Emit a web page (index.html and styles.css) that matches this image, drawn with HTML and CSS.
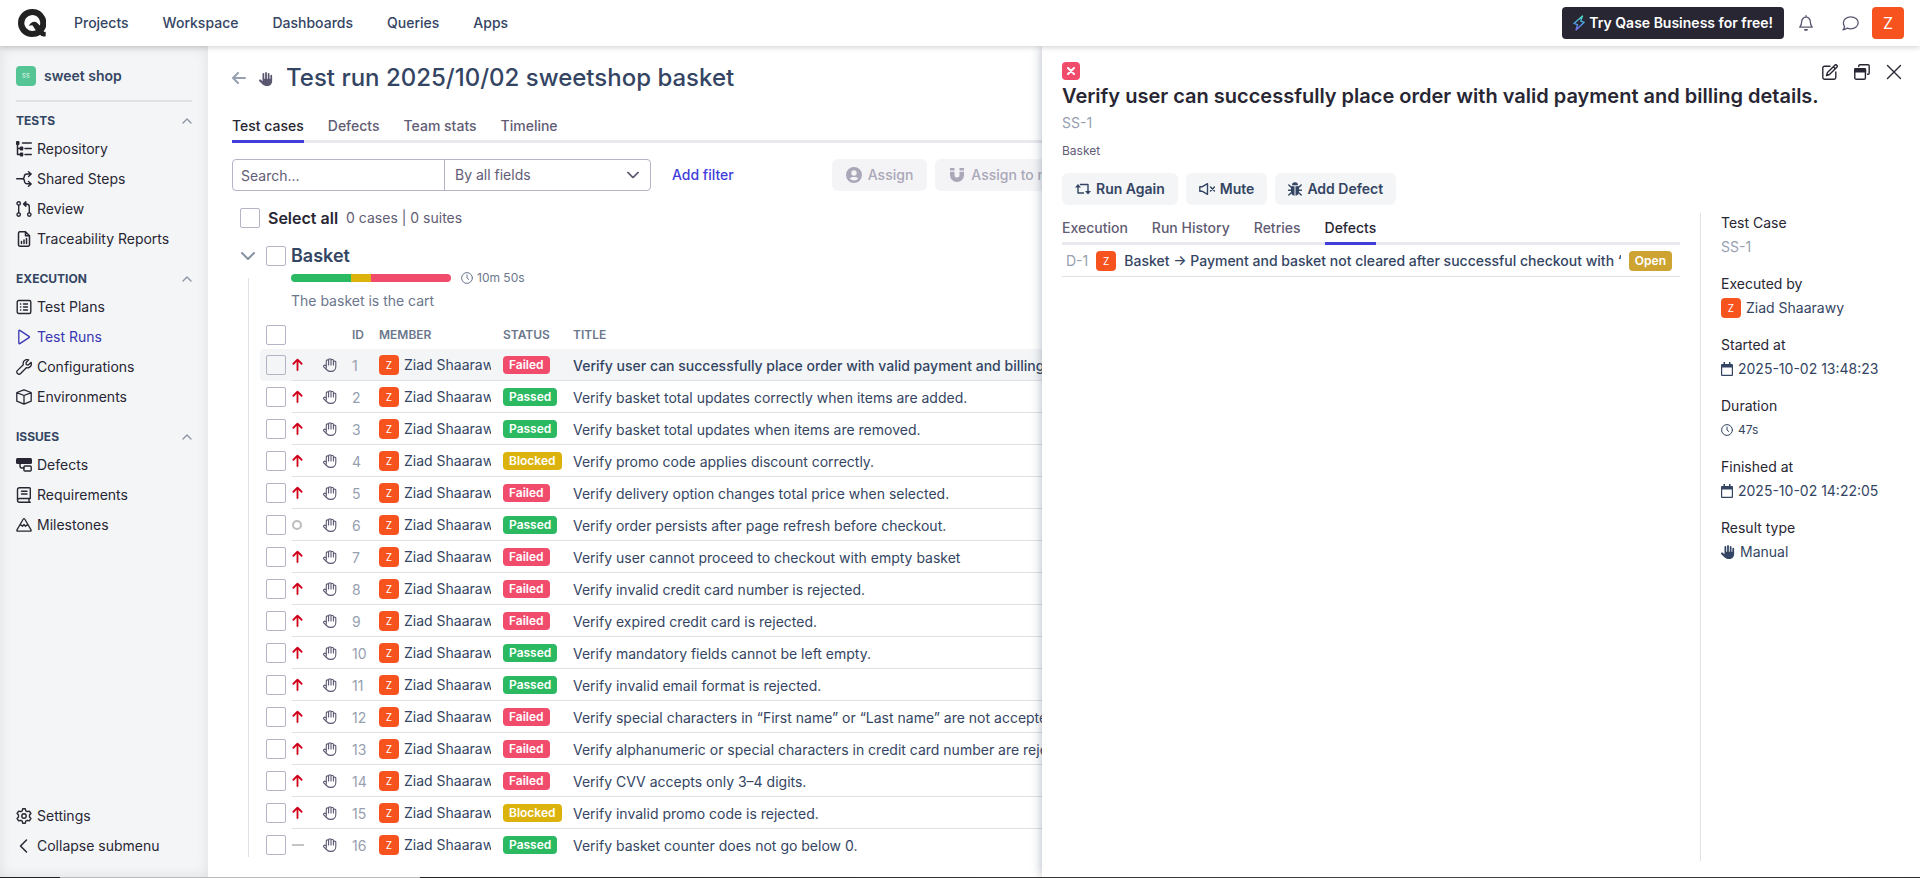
FILE: index.html
```html
<!DOCTYPE html>
<html lang="en">
<head>
<meta charset="utf-8">
<title>Test run 2025/10/02 sweetshop basket</title>
<meta name="viewport" content="width=device-width, initial-scale=1">
<link rel="stylesheet" href="styles.css">
</head>
<body>
<svg class="sprite" aria-hidden="true">
  <symbol id="hand" viewBox="0 0 512 512"><path fill="currentColor" d="M288 32c0-17.700-14.300-32-32-32s-32 14.300-32 32V240c0 8.800-7.200 16-16 16s-16-7.200-16-16V64c0-17.700-14.300-32-32-32s-32 14.300-32 32V336c0 1.500 0 3.100 .1 4.600L67.600 283c-16-15.200-41.300-14.600-56.600 1.400s-14.600 41.300 1.400 56.600L124.800 448c43.100 41.100 100.400 64 160 64H304c97.200 0 176-78.800 176-176V128c0-17.700-14.300-32-32-32s-32 14.300-32 32V240c0 8.800-7.200 16-16 16s-16-7.200-16-16V64c0-17.700-14.300-32-32-32s-32 14.300-32 32V240c0 8.800-7.200 16-16 16s-16-7.200-16-16V32z"/></symbol>
  <symbol id="hand-o" viewBox="0 0 14 14"><path class="s" stroke-width="1.100" d="M3.300 10V3a1.100 1.100 0 0 1 2.300 0v4M5.600 3V1.900a1.200 1.200 0 0 1 2.400 0V7M8 2.400a1.200 1.200 0 0 1 2.400 0V7M10.400 4.300a1.200 1.200 0 0 1 2.400 0V8.800a4.600 4.600 0 0 1-4.600 4.600h-.7a5 5 0 0 1-3.500-1.400L1 9.200a1.200 1.200 0 0 1 1.700-1.700l.6.500"/></symbol>
  <symbol id="up" viewBox="0 0 12 14"><path class="s" stroke-width="2" d="M6 13V2M1.500 6.200 6 1.700l4.500 4.500"/></symbol>
  <symbol id="chev-up" viewBox="0 0 10 6"><path class="s" stroke-width="1.300" d="M1 5 5 1l4 4"/></symbol>
  <symbol id="chev-down" viewBox="0 0 14 8"><path class="s" stroke-width="2" d="m1 1 6 6 6-6"/></symbol>
  <symbol id="clock" viewBox="0 0 12 12"><g class="s"><circle cx="6" cy="6" r="5.400"/><path d="M6 3v3l1.800 1.500"/></g></symbol>
  <symbol id="cal" viewBox="0 0 12 14"><path fill="currentColor" fill-rule="evenodd" d="M2.500 0H4v2h4V0h1.500v2H11a1 1 0 0 1 1 1v10a1 1 0 0 1-1 1H1a1 1 0 0 1-1-1V3a1 1 0 0 1 1-1h1.500zM1.200 5.500v7.300h9.600V5.500z"/></symbol>
</svg>
<div class="app">
  <header class="topbar">
    <a class="logo" href="#" aria-label="Qase"><svg width="28" height="28" viewBox="0 0 28 28"><path fill="#222" fill-rule="evenodd" d="M14 0a14 14 0 0 0 0 28c3.400 0 6-.8 8.200-2.200 1 1.300 2.500 1.900 5.500 1.400v-4.400c-1 .2-1.700 0-2.100-.5A14 14 0 0 0 14 0zm0 6a8 8 0 0 1 7.800 10.500l-2.800-2.800c-.7-.7-1.500-.9-2.500-.9-2.600.1-4.800 1.600-5.500 4l3.400-.5 3.400 4.900A8 8 0 1 1 14 6z"/></svg></a>
    <nav class="topnav" aria-label="Main">
      <a href="#">Projects</a><a href="#">Workspace</a><a href="#">Dashboards</a><a href="#">Queries</a><a href="#">Apps</a>
    </nav>
    <div class="actions">
      <button class="trial"><svg width="12" height="16" viewBox="0 0 12 16"><defs><linearGradient id="g" x1="0" y1="0" x2="0" y2="1"><stop offset="0" stop-color="#4fe0c0"/><stop offset=".5" stop-color="#4aa6e8"/><stop offset="1" stop-color="#7a6cf0"/></linearGradient></defs><path d="M9.500 1 1 8.500l3.600 1.200L3 15l8.200-7.700-3.500-1.200z" fill="none" stroke="url(#g)" stroke-width="1.300" stroke-linejoin="round"/></svg>Try Qase Business for free!</button>
      <button class="icon-btn" aria-label="Notifications"><svg width="14" height="16" viewBox="0 0 14 16"><g class="s" stroke-width="1.300"><path d="M7 .7v1.500M7 2.200a4.300 4.300 0 0 0-4.300 4.300c0 3-.7 4.200-1.900 5.700h12.400c-1.200-1.500-1.900-2.700-1.900-5.700A4.300 4.300 0 0 0 7 2.200z"/></g><path fill="currentColor" d="M5 14h4a2 2 0 0 1-4 0z"/></svg></button>
      <button class="icon-btn" aria-label="Messages"><svg width="17" height="15" viewBox="0 0 17 15"><path class="s" stroke-width="1.300" d="M8.800.8c4.100 0 7.400 2.700 7.400 6s-3.300 6-7.400 6c-1.200 0-2.400-.2-3.400-.7-1 .9-2.600 1.600-4.400 1.700.8-.9 1.500-2 1.600-3.200A5.500 5.500 0 0 1 1.400 6.800c0-3.300 3.300-6 7.400-6z"/></svg></button>
      <button class="avatar avatar-lg" aria-label="Account">Z</button>
    </div>
  </header>
  <div class="body">
    <aside class="sidebar">
      <a class="project" href="#"><span class="project-icon">SS</span>sweet shop</a>
      <section class="group">
        <button class="group-head">TESTS<svg width="10" height="6"><use href="#chev-up"/></svg></button>
        <a class="item" href="#"><svg width="16" height="16" viewBox="0 0 16 16"><g class="s" stroke-width="1.500"><path d="M1.500 2v11.500H5M1.500 7.500H5M6.500 2H15.300M9 7.500h6.300M9 13.500h6.300"/></g><g fill="currentColor"><rect width="3.500" height="4" rx="1"/><rect x="3.800" y="5.500" width="3.500" height="4" rx="1"/><rect x="3.800" y="11.500" width="3.500" height="4" rx="1"/></g></svg>Repository</a>
        <a class="item" href="#"><svg width="16" height="16" viewBox="0 0 16 16"><path class="s" stroke-width="1.400" d="M.7 7.800h5.500M6.200 7.800a2 2 0 0 0 2-2 3 3 0 0 1 3-2.800h4M6.200 7.800a2.500 2.500 0 0 1 2.300 2.500 2.500 2.500 0 0 0 2.500 2.500h4M12.500.8 15.200 3l-2.700 2.400M12.500 10.500l2.700 2.400-2.700 2.300"/></svg>Shared Steps</a>
        <a class="item" href="#"><svg width="16" height="16" viewBox="0 0 16 16"><g class="s" stroke-width="1.400"><circle cx="2.700" cy="2.400" r="1.700"/><circle cx="2.700" cy="13.600" r="1.700"/><circle cx="13.300" cy="13.600" r="1.700"/><path d="M2.700 4.200v7.600M13.300 11.800V6a3 3 0 0 0-3-3H8M9.800.8 7.500 3l2.300 2.200z"/></g></svg>Review</a>
        <a class="item" href="#"><svg width="16" height="16" viewBox="0 0 16 16"><path class="s" stroke-width="1.500" d="M3.500.8h6l4 4v9a1.400 1.400 0 0 1-1.400 1.400H3.900a1.400 1.400 0 0 1-1.400-1.400V2.200A1.400 1.400 0 0 1 3.900.8M9.500.8v4h4M5.500 10.500v2M8 9v3.500M10.500 7.500v5"/></svg>Traceability Reports</a>
      </section>
      <section class="group">
        <button class="group-head">EXECUTION<svg width="10" height="6"><use href="#chev-up"/></svg></button>
        <a class="item" href="#"><svg width="16" height="16" viewBox="0 0 16 16"><g class="s" stroke-width="1.400"><rect x="1.200" y="1.500" width="13.600" height="13" rx="1.500"/><path d="M4.500 5h.3M7.500 5h4M4.500 8h.3M7.500 8h4M4.500 11h.3M7.500 11h4"/></g></svg>Test Plans</a>
        <a class="item current" href="#" aria-current="page"><svg width="16" height="16" viewBox="0 0 16 16"><path class="s" stroke-width="1.300" d="M2.800 2v12c0 .7.500.9 1 .6l9.200-6c.5-.3.500-.9 0-1.200l-9.200-6c-.5-.3-1-.1-1 .6z"/></svg>Test Runs</a>
        <a class="item" href="#"><svg width="16" height="16" viewBox="0 0 16 16"><path class="s" stroke-width="1.300" d="M12.700.9a4 4 0 0 0-5.400 4.800L1.300 11.600a1.900 1.900 0 0 0 0 2.700l.4.400a1.900 1.900 0 0 0 2.700 0l5.900-6a4 4 0 0 0 4.800-5.400L12.300 6l-2-.3-.3-2z"/></svg>Configurations</a>
        <a class="item" href="#"><svg width="16" height="16" viewBox="0 0 16 16"><path class="s" stroke-width="1.300" d="M8 .8 15.200 3.500v8.700L8 15.200.8 12.200V3.500zM.8 3.700 8 6.500l7.200-2.800M8 6.500v8.700"/></svg>Environments</a>
      </section>
      <section class="group">
        <button class="group-head">ISSUES<svg width="10" height="6"><use href="#chev-up"/></svg></button>
        <a class="item" href="#"><svg width="16" height="16" viewBox="0 0 16 16"><rect y="1" width="16" height="6" rx="1.500" fill="currentColor"/><g class="s" stroke-width="1.400"><path d="M4 6.500V9a2 2 0 0 0 2 2h2"/><rect x="7.900" y="9" width="7.300" height="5" rx="1"/></g></svg>Defects</a>
        <a class="item" href="#"><svg width="16" height="16" viewBox="0 0 16 16"><path class="s" stroke-width="1.400" d="M14.300 11.500V1.700a1 1 0 0 0-1-1H3.500a2 2 0 0 0-2 2v10.500a2 2 0 0 0 2 2h10.800M14.300 11.500H3.500a1.900 1.900 0 0 0-2 1.800M13 11.500v3.500M5.500 4.200h5.500M5.500 7h5.500"/></svg>Requirements</a>
        <a class="item" href="#"><svg width="16" height="16" viewBox="0 0 16 16"><path class="s" stroke-width="1.300" d="M7.300 2 1 12.900c-.4.700 0 1.300.7 1.300h12.600c.7 0 1.100-.6.7-1.300L8.700 2c-.3-.6-1.100-.6-1.400 0zM4.500 7.500l2 1.800L8 7.500l1.500 1.800 2-1.800"/></svg>Milestones</a>
      </section>
      <section class="group group-end">
        <a class="item" href="#"><svg width="16" height="16" viewBox="0 0 16 16"><g class="s" stroke-width="1.400"><circle cx="8" cy="8" r="2.200"/><path d="M6.700.8h2.600l.5 2 1.500.9 2-.6 1.600 2.400-1.400 1.500v2l1.400 1.500-1.600 2.400-2-.6-1.500.9-.5 2H6.700l-.5-2-1.500-.9-2 .6-1.600-2.400L2.500 9V7L1.100 5.500l1.600-2.400 2 .6 1.500-.9z"/></g></svg>Settings</a>
        <button class="item"><svg width="16" height="16" viewBox="0 0 16 16"><path class="s" stroke-width="1.500" d="M10.500 2 4.500 8l6 6"/></svg>Collapse submenu</button>
      </section>
    </aside>
    <main class="main">
      <div class="run-head">
        <a class="back" href="#" aria-label="Back"><svg width="14" height="12" viewBox="0 0 14 12"><path class="s" stroke-width="2" d="M13 6H1.500M6 1 1 6l5 5"/></svg></a>
        <svg class="manual" width="14" height="14"><use href="#hand"/></svg>
        <h1>Test run 2025/10/02 sweetshop basket</h1>
      </div>
      <nav class="tabs" aria-label="Run">
        <a class="on" href="#">Test cases</a><a href="#">Defects</a><a href="#">Team stats</a><a href="#">Timeline</a>
      </nav>
      <div class="toolbar">
        <div class="filter">
          <input type="text" placeholder="Search..." aria-label="Search">
          <div class="select"><select aria-label="Search fields"><option>By all fields</option></select><svg width="12" height="8" viewBox="0 0 14 8"><use href="#chev-down"/></svg></div>
        </div>
        <button class="link-btn">Add filter</button>
        <div class="bulk">
          <button class="btn" disabled><svg width="16" height="16" viewBox="0 0 16 16"><path fill="currentColor" fill-rule="evenodd" d="M8 0a8 8 0 1 1 0 16A8 8 0 0 1 8 0zm0 3.300a2.700 2.700 0 1 0 0 5.400 2.700 2.700 0 0 0 0-5.400zM3.700 11.500a5.500 5.500 0 0 0 8.600 0A3.500 3.500 0 0 0 9.500 10h-3a3.500 3.500 0 0 0-2.800 1.500z"/></svg>Assign</button>
          <button class="btn" disabled><svg width="16" height="16" viewBox="0 0 16 16"><path fill="currentColor" d="M1 1h4.500v2.500H1zM10.500 1H15v2.500h-4.500zM1 4.700h4.500V8a2.500 2.500 0 0 0 5 0V4.700H15V8A7 7 0 0 1 1 8z"/></svg>Assign to me</button>
        </div>
      </div>
      <div class="select-all">
        <label><input type="checkbox">Select all</label><span>0 cases | 0 suites</span>
      </div>
      <section class="suite">
        <div class="rail"><button aria-label="Collapse suite"><svg width="14" height="8"><use href="#chev-down"/></svg></button><i></i></div>
        <div class="suite-main">
          <label class="suite-name"><input type="checkbox">Basket</label>
          <div class="suite-info">
            <div class="stats"><div class="bar"><i class="passed"></i><i class="blocked"></i><i class="failed"></i></div><svg width="12" height="12"><use href="#clock"/></svg>10m 50s</div>
            <p>The basket is the cart</p>
          </div>
          <table class="cases">
            <colgroup><col class="c1"><col class="c2"><col class="c3"><col class="c4"><col class="c5"><col class="c6"><col></colgroup>
            <thead><tr><th><input type="checkbox" aria-label="Select all in suite"></th><th></th><th></th><th>ID</th><th>MEMBER</th><th>STATUS</th><th>TITLE</th></tr></thead>
            <tbody>
              <tr class="active"><td><input type="checkbox" aria-label="Case 1"></td><td><svg class="high"><use href="#up"/></svg></td><td><svg class="kind"><use href="#hand-o"/></svg></td><td>1</td><td><div class="member"><span class="avatar">Z</span>Ziad Shaarawy</div></td><td><span class="badge failed">Failed</span></td><td>Verify user can successfully place order with valid payment and billing details.</td></tr>
              <tr><td><input type="checkbox" aria-label="Case 2"></td><td><svg class="high"><use href="#up"/></svg></td><td><svg class="kind"><use href="#hand-o"/></svg></td><td>2</td><td><div class="member"><span class="avatar">Z</span>Ziad Shaarawy</div></td><td><span class="badge passed">Passed</span></td><td>Verify basket total updates correctly when items are added.</td></tr>
              <tr><td><input type="checkbox" aria-label="Case 3"></td><td><svg class="high"><use href="#up"/></svg></td><td><svg class="kind"><use href="#hand-o"/></svg></td><td>3</td><td><div class="member"><span class="avatar">Z</span>Ziad Shaarawy</div></td><td><span class="badge passed">Passed</span></td><td>Verify basket total updates when items are removed.</td></tr>
              <tr><td><input type="checkbox" aria-label="Case 4"></td><td><svg class="high"><use href="#up"/></svg></td><td><svg class="kind"><use href="#hand-o"/></svg></td><td>4</td><td><div class="member"><span class="avatar">Z</span>Ziad Shaarawy</div></td><td><span class="badge blocked">Blocked</span></td><td>Verify promo code applies discount correctly.</td></tr>
              <tr><td><input type="checkbox" aria-label="Case 5"></td><td><svg class="high"><use href="#up"/></svg></td><td><svg class="kind"><use href="#hand-o"/></svg></td><td>5</td><td><div class="member"><span class="avatar">Z</span>Ziad Shaarawy</div></td><td><span class="badge failed">Failed</span></td><td>Verify delivery option changes total price when selected.</td></tr>
              <tr><td><input type="checkbox" aria-label="Case 6"></td><td><i class="medium"></i></td><td><svg class="kind"><use href="#hand-o"/></svg></td><td>6</td><td><div class="member"><span class="avatar">Z</span>Ziad Shaarawy</div></td><td><span class="badge passed">Passed</span></td><td>Verify order persists after page refresh before checkout.</td></tr>
              <tr><td><input type="checkbox" aria-label="Case 7"></td><td><svg class="high"><use href="#up"/></svg></td><td><svg class="kind"><use href="#hand-o"/></svg></td><td>7</td><td><div class="member"><span class="avatar">Z</span>Ziad Shaarawy</div></td><td><span class="badge failed">Failed</span></td><td>Verify user cannot proceed to checkout with empty basket</td></tr>
              <tr><td><input type="checkbox" aria-label="Case 8"></td><td><svg class="high"><use href="#up"/></svg></td><td><svg class="kind"><use href="#hand-o"/></svg></td><td>8</td><td><div class="member"><span class="avatar">Z</span>Ziad Shaarawy</div></td><td><span class="badge failed">Failed</span></td><td>Verify invalid credit card number is rejected.</td></tr>
              <tr><td><input type="checkbox" aria-label="Case 9"></td><td><svg class="high"><use href="#up"/></svg></td><td><svg class="kind"><use href="#hand-o"/></svg></td><td>9</td><td><div class="member"><span class="avatar">Z</span>Ziad Shaarawy</div></td><td><span class="badge failed">Failed</span></td><td>Verify expired credit card is rejected.</td></tr>
              <tr><td><input type="checkbox" aria-label="Case 10"></td><td><svg class="high"><use href="#up"/></svg></td><td><svg class="kind"><use href="#hand-o"/></svg></td><td>10</td><td><div class="member"><span class="avatar">Z</span>Ziad Shaarawy</div></td><td><span class="badge passed">Passed</span></td><td>Verify mandatory fields cannot be left empty.</td></tr>
              <tr><td><input type="checkbox" aria-label="Case 11"></td><td><svg class="high"><use href="#up"/></svg></td><td><svg class="kind"><use href="#hand-o"/></svg></td><td>11</td><td><div class="member"><span class="avatar">Z</span>Ziad Shaarawy</div></td><td><span class="badge passed">Passed</span></td><td>Verify invalid email format is rejected.</td></tr>
              <tr><td><input type="checkbox" aria-label="Case 12"></td><td><svg class="high"><use href="#up"/></svg></td><td><svg class="kind"><use href="#hand-o"/></svg></td><td>12</td><td><div class="member"><span class="avatar">Z</span>Ziad Shaarawy</div></td><td><span class="badge failed">Failed</span></td><td>Verify special characters in “First name” or “Last name” are not accepted.</td></tr>
              <tr><td><input type="checkbox" aria-label="Case 13"></td><td><svg class="high"><use href="#up"/></svg></td><td><svg class="kind"><use href="#hand-o"/></svg></td><td>13</td><td><div class="member"><span class="avatar">Z</span>Ziad Shaarawy</div></td><td><span class="badge failed">Failed</span></td><td>Verify alphanumeric or special characters in credit card number are rejected.</td></tr>
              <tr><td><input type="checkbox" aria-label="Case 14"></td><td><svg class="high"><use href="#up"/></svg></td><td><svg class="kind"><use href="#hand-o"/></svg></td><td>14</td><td><div class="member"><span class="avatar">Z</span>Ziad Shaarawy</div></td><td><span class="badge failed">Failed</span></td><td>Verify CVV accepts only 3–4 digits.</td></tr>
              <tr><td><input type="checkbox" aria-label="Case 15"></td><td><svg class="high"><use href="#up"/></svg></td><td><svg class="kind"><use href="#hand-o"/></svg></td><td>15</td><td><div class="member"><span class="avatar">Z</span>Ziad Shaarawy</div></td><td><span class="badge blocked">Blocked</span></td><td>Verify invalid promo code is rejected.</td></tr>
              <tr><td><input type="checkbox" aria-label="Case 16"></td><td><i class="unset"></i></td><td><svg class="kind"><use href="#hand-o"/></svg></td><td>16</td><td><div class="member"><span class="avatar">Z</span>Ziad Shaarawy</div></td><td><span class="badge passed">Passed</span></td><td>Verify basket counter does not go below 0.</td></tr>
            </tbody>
          </table>
        </div>
      </section>
    </main>
    <section class="drawer" aria-label="Test case result">
      <div class="drawer-top">
        <span class="result" aria-label="Failed"><svg width="8" height="8" viewBox="0 0 8 8"><path class="s" stroke-width="2" d="m1 1 6 6M7 1 1 7"/></svg></span>
        <div class="drawer-tools">
          <button aria-label="Edit"><svg width="16" height="16" viewBox="0 0 16 16"><g class="s" stroke-width="1.400"><path d="M8 2.200H2.500A1.700 1.700 0 0 0 .8 3.900v9.600a1.700 1.700 0 0 0 1.700 1.700h9.600a1.700 1.700 0 0 0 1.700-1.700V8"/><path d="M5.500 8.500 12.800 1.200a1.300 1.300 0 0 1 2 2L7.500 10.500l-3 1zM11.300 2.700l2 2"/></g></svg></button>
          <button aria-label="Open in window"><svg width="16" height="16" viewBox="0 0 16 16"><path class="s" stroke-width="1.400" d="M4.700 2.500V2A1.300 1.300 0 0 1 6 .8h8A1.300 1.300 0 0 1 15.200 2v7A1.300 1.300 0 0 1 14 10.300h-.5"/><rect class="s" stroke-width="1.400" x=".8" y="4.800" width="10.600" height="10.400" rx="1.300"/><path fill="currentColor" d="M0 8.500V5.800A1.700 1.700 0 0 1 1.700 4h9A1.700 1.700 0 0 1 12.200 5.800v2.700z"/></svg></button>
          <button aria-label="Close"><svg width="16" height="16" viewBox="0 0 16 16"><path class="s" stroke-width="1.400" d="m1.500 1.500 13 13M14.500 1.500l-13 13"/></svg></button>
        </div>
      </div>
      <h2>Verify user can successfully place order with valid payment and billing details.</h2>
      <div class="code">SS-1</div>
      <div class="path">Basket</div>
      <div class="drawer-body">
        <div class="drawer-main">
          <div class="buttons">
            <button class="btn"><svg width="16" height="12" viewBox="0 0 16 12"><path class="s" stroke-width="1.400" d="M3 3v7h5.500M5.500 1.500H13V9"/><path fill="currentColor" d="M0 4.500 3 1l3 3.500zM10 8l3 3.500L16 8z"/></svg>Run Again</button>
            <button class="btn"><svg width="16" height="12" viewBox="0 0 16 12"><path class="s" stroke-width="1.400" d="M.8 3.800v4.400H3L8.500 11.300V.7L3 3.800zM11.500 4l4 4M15.500 4l-4 4"/></svg>Mute</button>
            <button class="btn"><svg width="14" height="14" viewBox="0 0 14 14"><path fill="currentColor" d="M4 3.200a3 3 0 0 1 6 0zM3 4.200h3.500v9.500A4 4 0 0 1 3 9.800zM7.500 4.200H11v5.600a4 4 0 0 1-3.500 3.900z"/><path class="s" stroke-width="1.400" d="M3.500 5.500.8 3M3 8.200H.5M3.500 10.500.8 13M10.500 5.500 13.200 3M11 8.200h2.500M10.500 10.500l2.700 2.500"/></svg>Add Defect</button>
          </div>
          <nav class="tabs" aria-label="Result">
            <a href="#">Execution</a><a href="#">Run History</a><a href="#">Retries</a><a class="on" href="#">Defects</a>
          </nav>
          <div class="defect"><span class="code">D-1</span><span class="avatar">Z</span><a href="#">Basket → Payment and basket not cleared after successful checkout with “valid card”</a><span class="badge open">Open</span></div>
        </div>
        <dl class="meta">
          <dt>Test Case</dt><dd class="code">SS-1</dd>
          <dt>Executed by</dt><dd><span class="avatar">Z</span>Ziad Shaarawy</dd>
          <dt>Started at</dt><dd><svg width="12" height="14"><use href="#cal"/></svg>2025-10-02 13:48:23</dd>
          <dt>Duration</dt><dd class="small"><svg width="12" height="12"><use href="#clock"/></svg>47s</dd>
          <dt>Finished at</dt><dd><svg width="12" height="14"><use href="#cal"/></svg>2025-10-02 14:22:05</dd>
          <dt>Result type</dt><dd><svg width="14" height="14"><use href="#hand"/></svg>Manual</dd>
        </dl>
      </div>
    </section>
  </div>
  <div class="edge"></div>
</div>
</body>
</html>
```
FILE: styles.css
```css
* { box-sizing: border-box; }
body { margin: 0; font: 14px/20px Inter, sans-serif; color: #344563; background: #fff; }
a { color: inherit; text-decoration: none; }
button { font: inherit; color: inherit; background: none; border: 0; padding: 0; }
h1, h2, p, dl, dd { margin: 0; font-weight: inherit; }
svg { flex: none; display: block; }
.sprite { position: absolute; width: 0; height: 0; }
.s { fill: none; stroke: currentColor; stroke-linecap: round; stroke-linejoin: round; }

.app { min-height: 100vh; display: grid; grid-template-rows: 46px 1fr 1px; }
.edge { background: linear-gradient(90deg, #222 60px, #bbb 60px, #bbb 420px, #222 420px, #444 1440px, #2d2d2d); }

.topbar { display: flex; align-items: center; padding: 0 16px 0 18px; background: #fff; box-shadow: 0 1px 6px rgba(0, 0, 0, .2); z-index: 3; }
.topnav { display: flex; gap: 34px; margin-left: 28px; font-weight: 500; }
.actions { display: flex; align-items: center; margin-left: auto; color: #5a5770; }
.trial { display: flex; align-items: center; gap: 4px; height: 32px; padding: 0 11px; border-radius: 4px; background: #282633; color: #fff; font-weight: 600; }
.icon-btn { width: 44px; display: grid; place-items: center; }
.avatar { flex: none; display: inline-grid; place-items: center; width: 20px; height: 20px; border-radius: 4px; background: #f7531f; color: #fff; font-size: 10px; }
.avatar-lg { width: 32px; height: 32px; font-size: 16px; }

.body { display: grid; grid-template-columns: 208px minmax(0, 1fr); position: relative; overflow: hidden; }
.sidebar { display: flex; flex-direction: column; padding: 16px; background: #f3f5f7; box-shadow: inset 0 0 14px rgba(0, 0, 0, .09); color: #282633; }
.project { display: flex; align-items: center; gap: 8px; height: 40px; padding-bottom: 10px; margin-bottom: 4px; border-bottom: 2px solid #e0e2e5; color: #344563; font-weight: 600; }
.project-icon { display: grid; place-items: center; width: 20px; height: 20px; border-radius: 4px; background: #56c596; color: #c5ecda; font-size: 6px; line-height: 8px; }
.group { margin-bottom: 10px; }
.group-end { margin: auto 0 0; }
.group-head { display: flex; justify-content: space-between; align-items: center; width: 100%; height: 28px; padding-top: 2px; color: #344563; font-size: 12px; font-weight: 700; }
.group-head svg { color: #8993a4; }
.item { display: flex; align-items: center; gap: 5px; height: 30px; }
.item.current { color: #3a36b4; }

.main { padding: 16px 16px 16px 24px; }
.run-head { display: flex; align-items: center; height: 32px; }
.back { color: #97a0af; }
.manual { margin: 2px 13px 0; color: #5a5770; }
h1 { font-size: 24px; line-height: 32px; font-weight: 500; }
.tabs { display: flex; gap: 24px; border-bottom: 3px solid #e9e9ef; color: #5f5c74; font-weight: 500; }
.tabs a { height: 27px; margin-bottom: -3px; border-bottom: 3px solid transparent; }
.tabs .on { color: #282633; border-color: #413ddb; }
.main .tabs { margin-top: 22px; }
.toolbar { display: flex; align-items: center; margin-top: 16px; height: 32px; }
.filter { display: grid; grid-template-columns: 211px 206px; height: 32px; border: 1px solid #b5b3c6; border-radius: 4px; }
.filter input, .filter select { appearance: none; width: 100%; height: 30px; border: 0; padding: 0 8px; background: none; font: inherit; color: #5f5c74; }
.filter input::placeholder { color: #5f5c74; }
.select { display: flex; align-items: center; border-left: 1px solid #b5b3c6; padding-right: 11px; color: #5f5c74; }
.filter select { padding: 0 10px; }
.link-btn { margin-left: 21px; color: #413ddb; font-weight: 500; }
.bulk { display: flex; gap: 8px; margin-left: 98px; }
.btn { display: flex; align-items: center; gap: 5px; height: 32px; padding: 0 13px; border-radius: 6px; background: #f3f5f7; font-weight: 600; }
.btn:disabled { gap: 6px; padding: 0 14px; background: #f4f4f6; color: #a9a7b8; font-weight: 500; }

input[type="checkbox"] { appearance: none; display: block; flex: none; width: 20px; height: 20px; margin: 0; border: 1px solid #b5b3c6; border-radius: 2px; }
.select-all { display: flex; align-items: center; gap: 8px; margin: 17px 0 0 8px; color: #5f5c74; }
.select-all label { display: flex; gap: 8px; align-items: center; color: #282633; font-size: 16px; font-weight: 600; }
.suite { display: grid; grid-template-columns: 16px minmax(0, 1fr); column-gap: 4px; margin: 18px 0 0 8px; }
.rail { display: flex; flex-direction: column; align-items: center; color: #8993a4; }
.rail button { display: grid; place-items: center; width: 16px; height: 20px; }
.rail i { flex: 1; width: 1px; margin: 12px 0 4px; background: #dfe1e6; }
.suite-name { display: flex; align-items: center; gap: 5px; padding-left: 6px; font-size: 18px; font-weight: 600; }
.suite-info { padding-left: 31px; color: #6b778c; }
.stats { display: flex; align-items: center; gap: 4px; margin-top: 4px; height: 16px; font-size: 12px; }
.stats svg { margin-left: 6px; }
.suite-info p { margin: 5px 0 10px; }
.bar { display: flex; width: 160px; height: 8px; border-radius: 4px; overflow: hidden; }
.bar i { flex: 3; }
.bar .blocked { flex: 1; }
.bar .failed { flex: 4; }
.passed { background: #2bb961; }
.blocked { background: #dcb30c; }
.failed { background: #f14c6c; }
.open { background: #cda432; }

.cases { width: 100%; table-layout: fixed; border-collapse: separate; border-spacing: 0; }
.c1 { width: 32px; } .c2 { width: 31px; } .c3 { width: 29px; } .c4 { width: 27px; } .c5 { width: 124px; } .c6 { width: 70px; }
.cases th { height: 28px; padding: 0; text-align: left; font-size: 12px; font-weight: 600; color: #6b778c; }
.cases td { height: 32px; padding: 0; white-space: nowrap; overflow: hidden; border-bottom: 1px solid #dfe1e6; }
.cases td:first-child { border-color: transparent; }
.cases td:first-child, .cases th:first-child { padding-left: 6px; }
.cases tr:last-child td { border-color: transparent; }
.cases td:nth-child(4) { color: #97a0af; }
.cases td:nth-child(4), .cases td:last-child { padding-top: 2px; }
.active td { background: #f3f5f7; }
.active td:first-child { border-radius: 4px 0 0 4px; }
.active td:last-child { font-weight: 500; }
.high { width: 11px; height: 13px; color: #d0021b; }
.kind { width: 14px; height: 14px; color: #5a5770; }
.medium { display: block; width: 10px; height: 10px; border: 2px solid #bdbdbd; border-radius: 5px; }
.unset { display: block; width: 12px; height: 2px; background: #c4c4c4; }
.member { display: flex; align-items: center; gap: 5px; width: 112px; overflow: hidden; }
.badge { flex: none; display: block; width: max-content; height: 18px; padding: 0 6px; border-radius: 4px; color: #fff; font-size: 12px; line-height: 18px; font-weight: 600; }

.drawer { position: absolute; top: 0; right: 0; bottom: 0; width: calc(50vw - 82px); min-width: 640px; display: flex; flex-direction: column; padding: 16px 20px; background: #fff; box-shadow: 0 0 10px rgba(52, 69, 99, .4); z-index: 2; }
.drawer-top { display: flex; justify-content: space-between; height: 20px; color: #282633; }
.result { display: grid; place-items: center; width: 18px; height: 18px; border-radius: 4px; background: #f14c6c; color: #fff; }
.drawer-tools { display: flex; gap: 16px; margin: 2px -2px 0 0; height: 16px; }
h2 { font-size: 20px; line-height: 28px; font-weight: 600; color: #282633; }
.code { color: #97a0af; }
.drawer > .code { margin-top: 3px; }
.path { margin-top: 8px; font-size: 12px; color: #5f5c74; }
.drawer-body { flex: 1; display: grid; grid-template-columns: minmax(0, 1fr) 200px; gap: 20px; margin-top: 12px; }
.buttons { display: flex; gap: 8px; }
.drawer .tabs { margin-top: 13px; }
.defect { display: flex; align-items: center; height: 32px; padding: 0 8px 0 4px; border-bottom: 1px solid #dfe1e6; }
.defect .avatar { margin: 0 8px; }
.defect a { flex: 1; overflow: hidden; white-space: nowrap; margin-right: 8px; font-weight: 500; }
.defect .open { height: 20px; line-height: 20px; }
.meta { margin-top: 40px; border-left: 1px solid #dfe1e6; padding-left: 20px; }
.meta dt { color: #282633; }
.meta dd { display: flex; align-items: center; gap: 5px; height: 20px; margin: 4px 0 17px; }
.meta .small { font-size: 12px; }
```
